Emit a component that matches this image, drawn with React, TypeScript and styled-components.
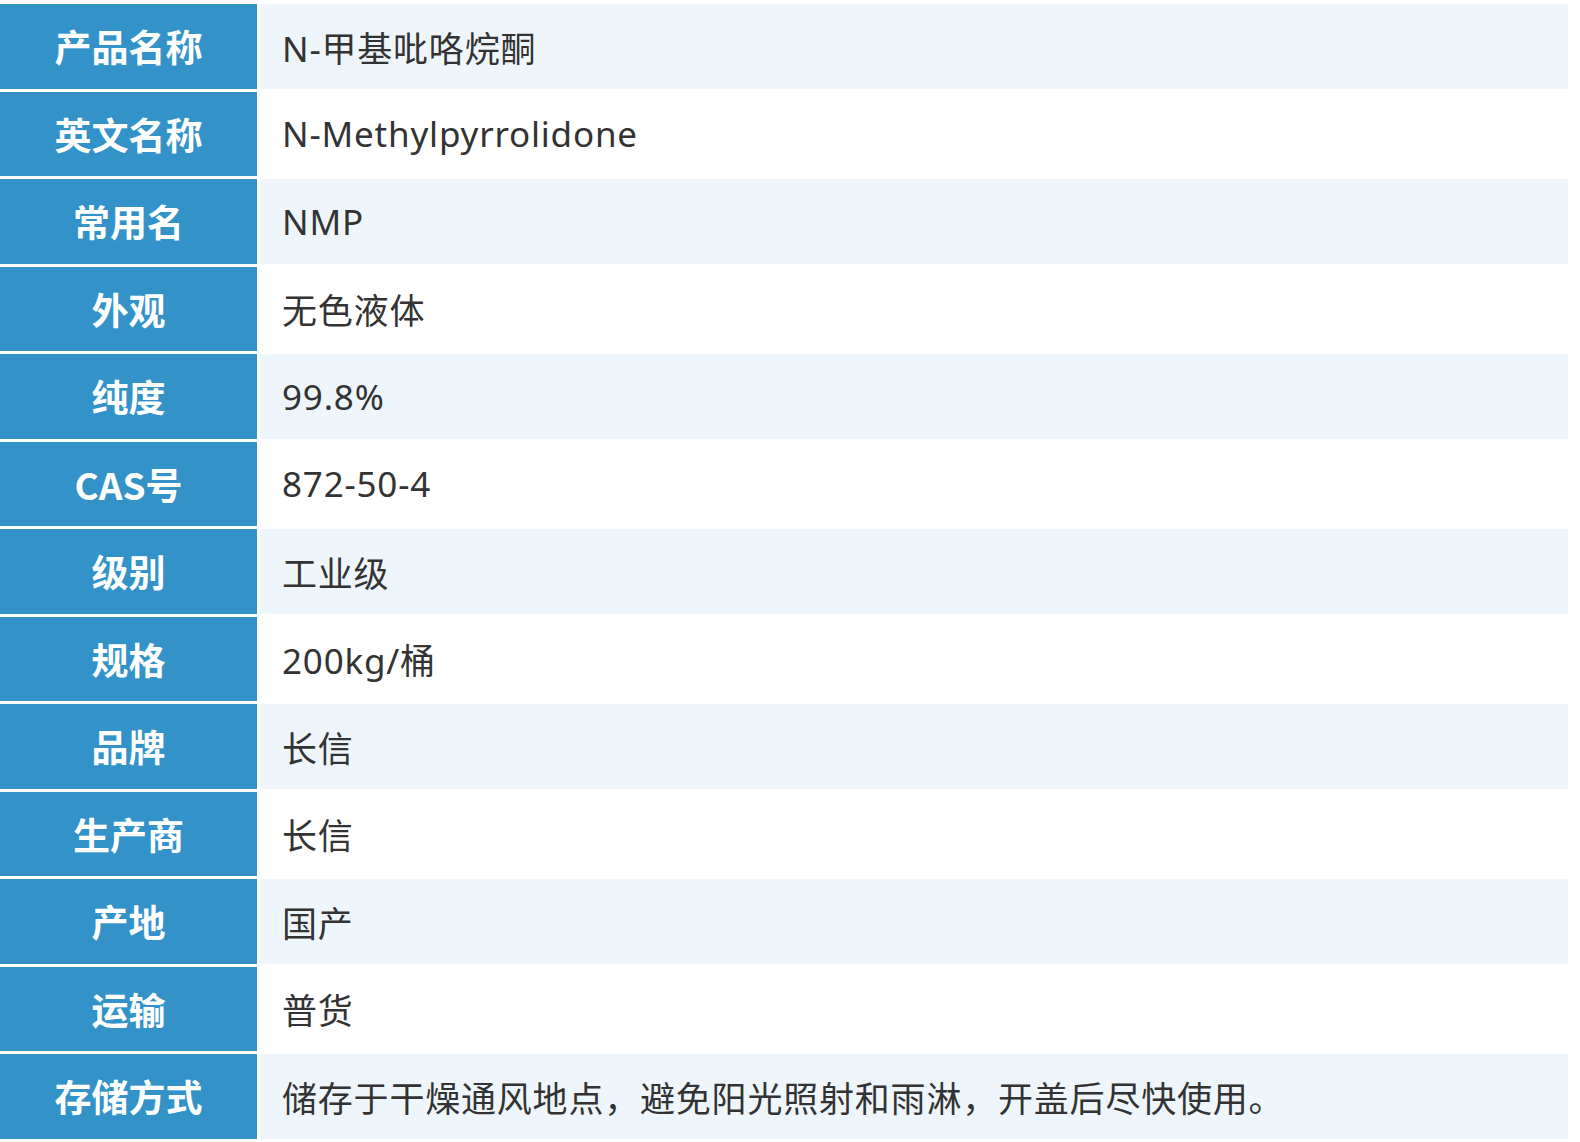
import React from "react";
import styled, { createGlobalStyle } from "styled-components";

const G = createGlobalStyle`
  html, body { margin: 0; background: #fff; }
  body { font-family: "Noto Sans CJK SC", "Noto Sans", sans-serif; }
`;

const Table = styled.div`
  display: grid;
  grid-template-columns: 257px 1fr;
  column-gap: 3px;
  row-gap: 3px;
  width: 1568px;
  padding-top: 4px;
`;

const Label = styled.div`
  background: #3393c8;
  color: #fff;
  font-weight: 700;
  font-size: 37px;
  height: 84.5px;
  display: flex;
  align-items: center;
  justify-content: center;
`;

const Value = styled.div<{ $alt: boolean }>`
  background: ${(p) => (p.$alt ? "#eef6fb" : "#ffffff")};
  color: #333;
  font-size: 35px;
  letter-spacing: 0.8px;
  display: flex;
  align-items: center;
  padding-left: 22px;
  font-family: "Noto Sans", "Noto Sans CJK SC", sans-serif;
`;

const rows: [string, string][] = [
  ["产品名称", "N-甲基吡咯烷酮"],
  ["英文名称", "N-Methylpyrrolidone"],
  ["常用名", "NMP"],
  ["外观", "无色液体"],
  ["纯度", "99.8%"],
  ["CAS号", "872-50-4"],
  ["级别", "工业级"],
  ["规格", "200kg/桶"],
  ["品牌", "长信"],
  ["生产商", "长信"],
  ["产地", "国产"],
  ["运输", "普货"],
  ["存储方式", "储存于干燥通风地点，避免阳光照射和雨淋，开盖后尽快使用。"],
];

export default function App() {
  return (
    <>
      <G />
      <Table>
        {rows.map(([k, v], i) => (
          <React.Fragment key={k}>
            <Label>{k}</Label>
            <Value $alt={i % 2 === 0}>{v}</Value>
          </React.Fragment>
        ))}
      </Table>
    </>
  );
}
